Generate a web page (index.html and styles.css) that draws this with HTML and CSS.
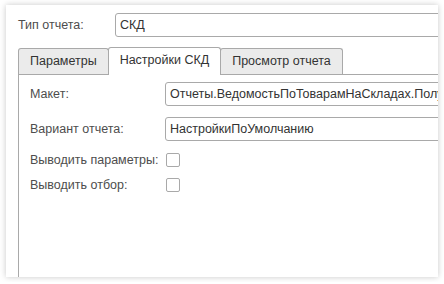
FILE: index.html
```html
<!DOCTYPE html>
<html lang="ru">
<head>
    <meta charset="UTF-8">
    <title>Настройки отчета</title>
    <link rel="stylesheet" href="styles.css">
</head>
<body>
    <div class="window">
        <div class="head-row">
            <label class="head-label">Тип отчета:</label>
            <div class="field head-field">СКД</div>
        </div>

        <div class="tabs">
            <div class="tab">Параметры</div>
            <div class="tab active">Настройки СКД</div>
            <div class="tab">Просмотр отчета</div>
        </div>

        <div class="tab-page">
            <div class="row row-first">
                <label class="row-label">Макет:</label>
                <div class="field">Отчеты.ВедомостьПоТоварамНаСкладах.ПолучитьМакет</div>
            </div>
            <div class="row row-second">
                <label class="row-label">Вариант отчета:</label>
                <div class="field">НастройкиПоУмолчанию</div>
            </div>
            <div class="row row-check">
                <label class="row-label">Выводить параметры:</label>
                <span class="check"></span>
            </div>
            <div class="row row-check row-last">
                <label class="row-label">Выводить отбор:</label>
                <span class="check"></span>
            </div>
        </div>
    </div>
</body>
</html>
```

FILE: styles.css
```css
body {
    margin: 0;
    background-color: #fff;
    font-family: "Liberation Sans", Arial, sans-serif;
    font-size: 12.5px;
    color: #4d4d4d;
}
.window {
    margin: 5px 6px;
    height: 272px;
    background-color: #fff;
    box-shadow: 0 0 6px rgba(0, 0, 0, 0.22);
    overflow: hidden;
    padding: 8px 0 0 12px;
    box-sizing: border-box;
}
.head-row {
    display: flex;
    align-items: center;
    height: 24px;
}
.head-label {
    width: 97px;
    flex: none;
}
.field {
    flex: none;
    width: 360px;
    height: 24px;
    line-height: 22px;
    padding: 0 4px;
    border: 1px solid #a9a9a9;
    border-radius: 3px 0 0 3px;
    box-sizing: border-box;
    color: #333;
    white-space: nowrap;
    overflow: hidden;
}
.head-field {
    width: 340px;
}
.tabs {
    display: flex;
    align-items: flex-end;
    margin-top: 10px;
    height: 27px;
}
.tab {
    height: 26px;
    line-height: 25px;
    padding: 0 11px;
    background-color: #ebebeb;
    border: 1px solid #a9a9a9;
    border-bottom: none;
    border-radius: 3px 3px 0 0;
    box-sizing: border-box;
    color: #333;
}
.tab.active {
    height: 28px;
    margin-bottom: -1px;
    background-color: #fff;
    position: relative;
    z-index: 1;
}
.tab + .tab {
    margin-left: -1px;
}
.tab-page {
    width: 440px;
    height: 220px;
    border-top: 1px solid #a9a9a9;
    border-left: 1px solid #a9a9a9;
    padding: 7px 0 0 11px;
    box-sizing: border-box;
}
.row {
    display: flex;
    align-items: center;
    height: 24px;
}
.row-second {
    margin-top: 11px;
}
.row-check {
    height: 20px;
    margin-top: 9px;
}
.row-last {
    margin-top: 5px;
}
.row-label {
    width: 135px;
    flex: none;
}
.check {
    width: 14px;
    height: 14px;
    margin-left: 1px;
    border: 1px solid #a9a9a9;
    border-radius: 2px;
    box-sizing: border-box;
}
```
